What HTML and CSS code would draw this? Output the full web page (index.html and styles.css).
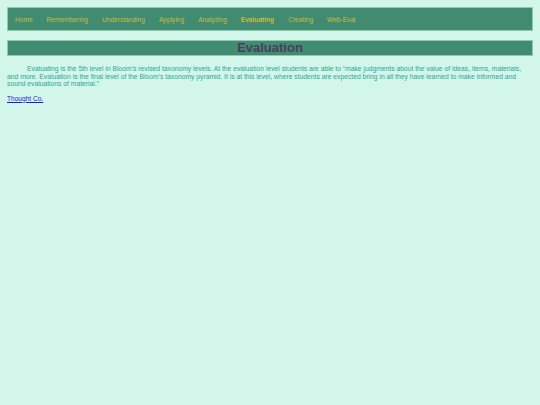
FILE: index.html
```html
<!DOCTYPE html>
<html>
<head>
<meta charset="utf-8">
<link rel="stylesheet" href="styles.css">
</head>
<body>
<nav class="nav">
  <a class="nav-item" href="#">Home</a>
  <a class="nav-item" href="#">Remembering</a>
  <a class="nav-item" href="#">Understanding</a>
  <a class="nav-item" href="#">Applying</a>
  <a class="nav-item" href="#">Analyzing</a>
  <a class="nav-item active" href="#">Evaluating</a>
  <a class="nav-item" href="#">Creating</a>
  <a class="nav-item" href="#">Web-Eval</a>
</nav>
<h1 class="title">Evaluation</h1>
<p class="text">Evaluating is the 5th level in Bloom’s revised taxonomy levels. At the evaluation level students are able to “make judgments about the value of ideas, items, materials, and more. Evaluation is the final level of the Bloom’s taxonomy pyramid. It is at this level, where students are expected bring in all they have learned to make informed and sound evaluations of material.”</p>
<a class="source" href="#">Thought Co.</a>
</body>
</html>
```
FILE: styles.css
```css
html, body {
  background: #d3f6ea;
}
body {
  margin: 7px;
  font-family: "Liberation Sans", Arial, sans-serif;
}
.nav {
  display: flex;
  align-items: center;
  height: 22px;
  background: #418b71;
  border: 1px solid #8fc9ae;
  padding: 0;
}
.nav-item {
  font-size: 6.6px;
  color: #c6bb42;
  text-decoration: none;
  padding: 0 7px;
}
.nav-item.active {
  font-weight: bold;
}
.title {
  margin: 9px 0 0;
  height: 14px;
  line-height: 14px;
  background: #418b71;
  border: 1px solid #8fc9ae;
  text-align: center;
  font-size: 13px;
  font-weight: bold;
  color: #4a3e5e;
}
.text {
  margin: 9px 0 0;
  font-size: 6.75px;
  line-height: 7.5px;
  color: #2ba697;
  text-indent: 20px;
}
.source {
  display: block;
  width: fit-content;
  margin-top: 6px;
  font-size: 6.6px;
  line-height: 9px;
  color: #1a1ad0;
  text-decoration: underline;
  text-decoration-thickness: 1px;
  text-underline-offset: 1px;
}
```
